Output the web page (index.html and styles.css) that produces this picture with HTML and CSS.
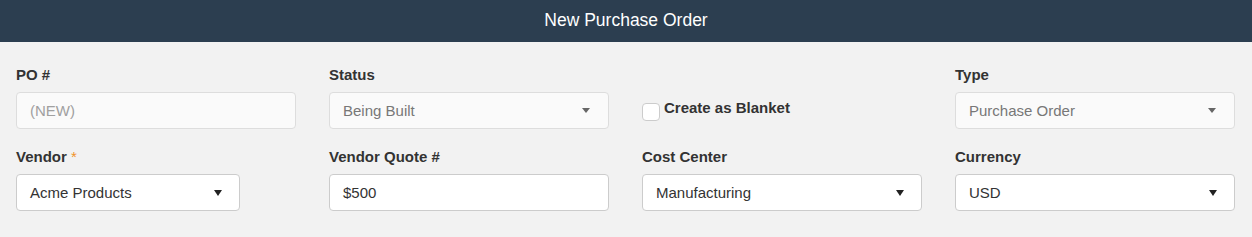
FILE: index.html
```html
<!DOCTYPE html>
<html>
<head>
<meta charset="utf-8">
<link rel="stylesheet" href="styles.css">
</head>
<body>
<div class="header">New Purchase Order</div>
<div class="form">
  <div class="field">
    <div class="label">PO #</div>
    <div class="input disabled placeholder">(NEW)</div>
  </div>
  <div class="field">
    <div class="label">Status</div>
    <div class="input disabled select"><span>Being Built</span><span class="caret"></span></div>
  </div>
  <div class="field check-field">
    <span class="checkbox"></span><span class="check-label">Create as Blanket</span>
  </div>
  <div class="field">
    <div class="label">Type</div>
    <div class="input disabled select"><span>Purchase Order</span><span class="caret"></span></div>
  </div>
  <div class="field">
    <div class="label">Vendor <span class="req">*</span></div>
    <div class="input select narrow"><span>Acme Products</span><span class="caret"></span></div>
  </div>
  <div class="field">
    <div class="label">Vendor Quote #</div>
    <div class="input">$500</div>
  </div>
  <div class="field">
    <div class="label">Cost Center</div>
    <div class="input select"><span>Manufacturing</span><span class="caret"></span></div>
  </div>
  <div class="field">
    <div class="label">Currency</div>
    <div class="input select"><span>USD</span><span class="caret"></span></div>
  </div>
</div>
</body>
</html>
```
FILE: styles.css
```css
html, body {
  margin: 0;
  padding: 0;
  background: #f2f2f2;
  font-family: "Liberation Sans", Arial, sans-serif;
}
.header {
  height: 42px;
  background: #2c3e50;
  color: #ffffff;
  font-size: 17.5px;
  line-height: 41px;
  text-align: center;
}
.form {
  display: grid;
  grid-template-columns: repeat(4, 280px);
  column-gap: 33px;
  row-gap: 18px;
  padding: 23px 17px 26px 16px;
}
.field {
  display: flex;
  flex-direction: column;
}
.label {
  font-size: 15px;
  font-weight: bold;
  color: #333333;
  line-height: 20px;
  height: 20px;
  margin-bottom: 7px;
}
.req {
  color: #f0932b;
  font-weight: normal;
}
.input {
  box-sizing: border-box;
  height: 37px;
  border: 1px solid #cccccc;
  border-radius: 4px;
  background: #ffffff;
  color: #333333;
  font-size: 15px;
  padding: 0 13px;
  display: flex;
  align-items: center;
  justify-content: space-between;
}
.input.narrow {
  width: 224px;
}
.input.disabled {
  background: #fafafa;
  border-color: #dddddd;
  color: #777777;
}
.input.placeholder {
  color: #a0a0a0;
}
.caret {
  width: 0;
  height: 0;
  border-left: 4.5px solid transparent;
  border-right: 4.5px solid transparent;
  border-top: 6px solid #222222;
  margin-right: 4px;
}
.input.disabled .caret {
  border-top-color: #666666;
  border-left-width: 4px;
  border-right-width: 4px;
  border-top-width: 5px;
  margin-right: 5px;
}
.check-field {
  flex-direction: row;
  align-items: flex-start;
  padding-top: 37px;
}
.checkbox {
  box-sizing: border-box;
  width: 18px;
  height: 18px;
  border: 1px solid #cccccc;
  border-radius: 4px;
  background: #ffffff;
  margin-right: 4px;
  margin-top: 1px;
}
.check-label {
  font-size: 15px;
  font-weight: bold;
  color: #333333;
  line-height: 12px;
}
```
